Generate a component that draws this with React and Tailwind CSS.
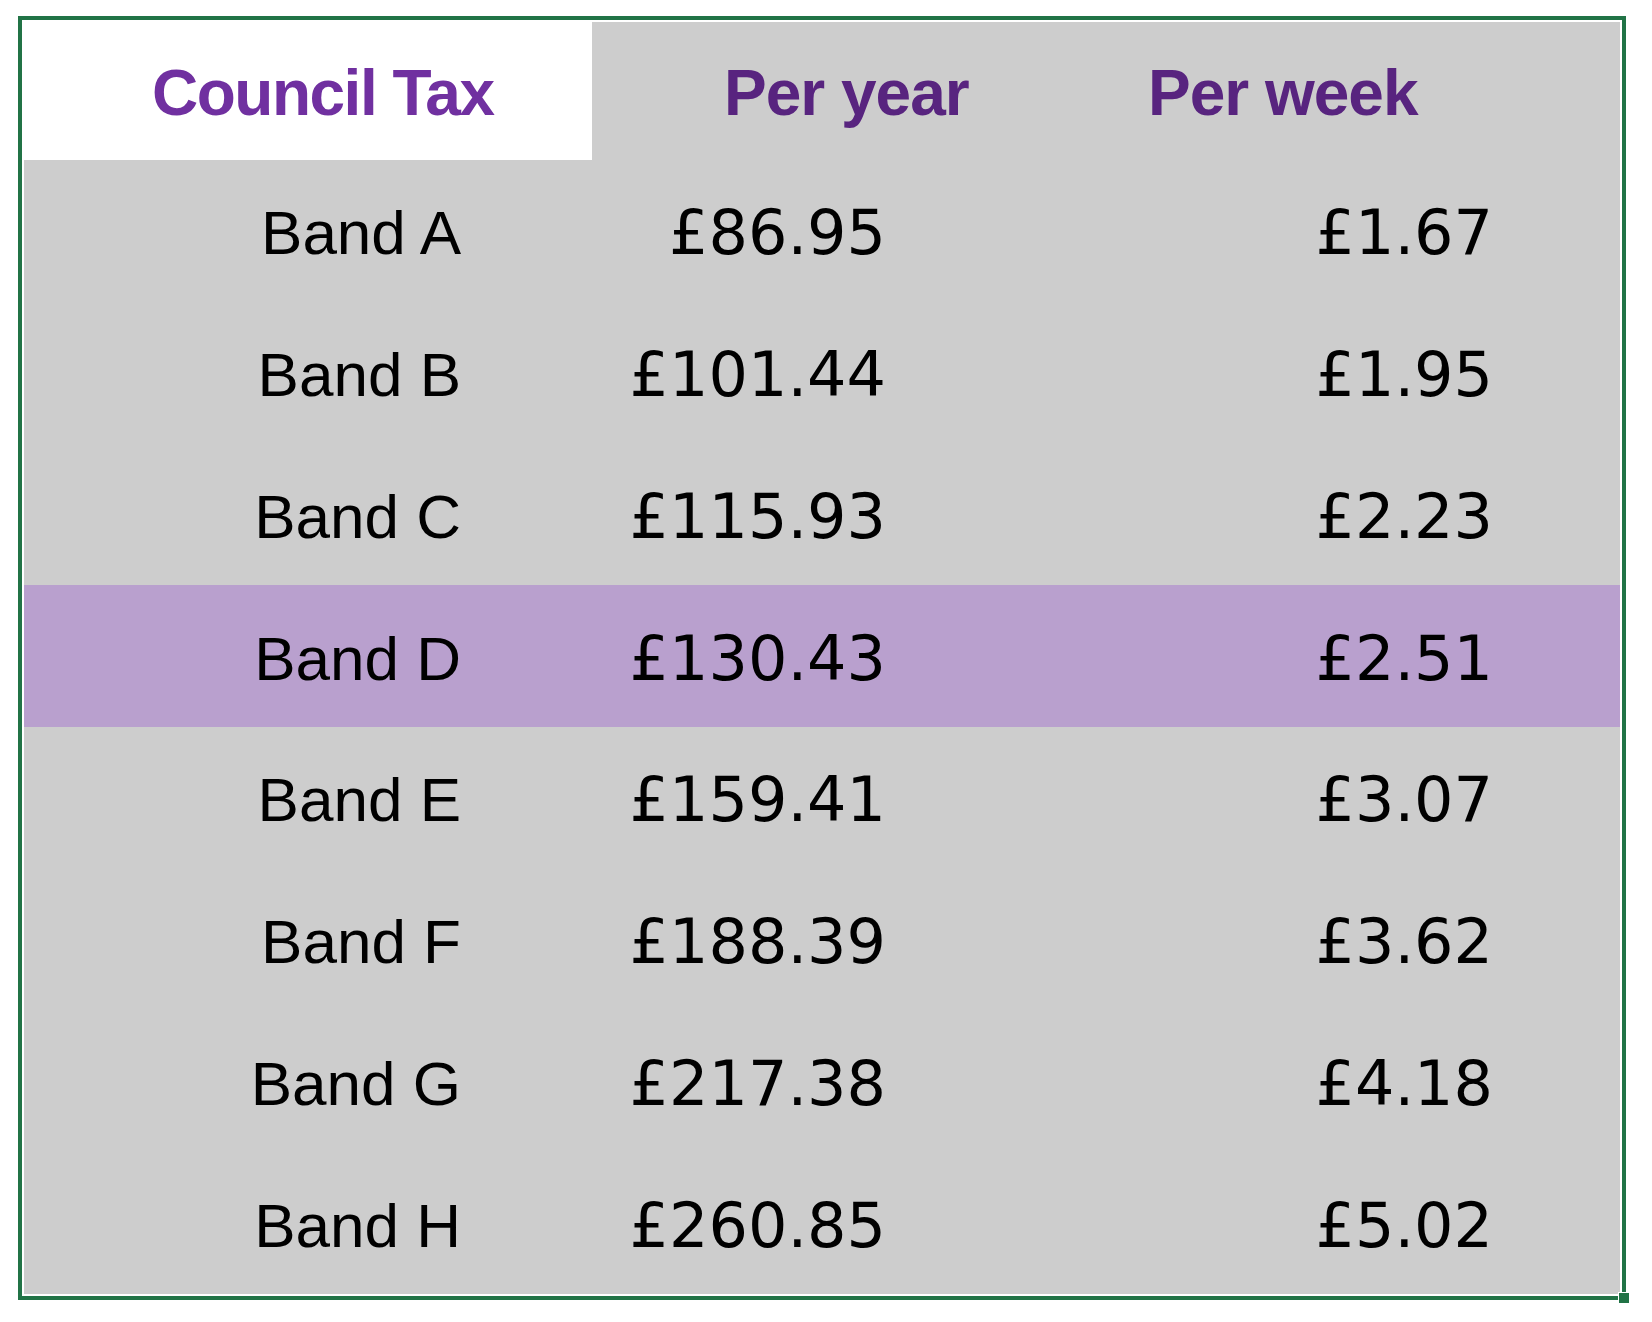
import React from 'react';

const bands = [
  { band: 'Band A', year: '£86.95', week: '£1.67' },
  { band: 'Band B', year: '£101.44', week: '£1.95' },
  { band: 'Band C', year: '£115.93', week: '£2.23' },
  { band: 'Band D', year: '£130.43', week: '£2.51', highlight: true },
  { band: 'Band E', year: '£159.41', week: '£3.07' },
  { band: 'Band F', year: '£188.39', week: '£3.62' },
  { band: 'Band G', year: '£217.38', week: '£4.18' },
  { band: 'Band H', year: '£260.85', week: '£5.02' },
];

const App = () => {
  return (
    <div className="min-h-screen bg-white pt-4 pl-[18px]" style={{ fontFamily: '"Liberation Sans", Arial, sans-serif' }}>
      <div className="relative w-[1608px] h-[1284px] border-4 border-[#217346] bg-white p-[2px]">
        <div className="grid h-full bg-[#cdcdcd] grid-cols-[568px_408px_1fr] grid-rows-[138px_repeat(8,1fr)]">
          {/* Header row */}
          <div className="flex items-center bg-white pt-1 pl-[128px] text-[64px] font-bold tracking-[-1.5px] text-[#7030a0]">
            Council Tax
          </div>
          <div className="flex items-center pt-1 pl-[132px] text-[64px] font-bold tracking-[-1px] text-[#58247f]">
            Per year
          </div>
          <div className="flex items-center pt-1 pl-[148px] text-[64px] font-bold tracking-[-1px] text-[#58247f]">
            Per week
          </div>

          {/* Band rows */}
          {bands.map((row) => (
            <React.Fragment key={row.band}>
              <div className={`flex items-center justify-end pt-1 pr-[131px] text-[62px] text-black ${row.highlight ? 'bg-[#b9a0ce]' : ''}`}>
                {row.band}
              </div>
              <div
                className={`flex items-center justify-end pt-1 pr-[114px] text-[62px] font-['DejaVu_Sans',sans-serif] text-black ${row.highlight ? 'bg-[#b9a0ce]' : ''}`}
              >
                {row.year}
              </div>
              <div
                className={`flex items-center justify-end pt-1 pr-[127px] text-[62px] font-['DejaVu_Sans',sans-serif] text-black ${row.highlight ? 'bg-[#b9a0ce]' : ''}`}
              >
                {row.week}
              </div>
            </React.Fragment>
          ))}
        </div>

        {/* selection handle */}
        <div className="absolute -right-[7px] -bottom-[7px] h-[10px] w-[10px] bg-[#217346] outline outline-1 outline-white" />
      </div>
    </div>
  );
};

export default App;
